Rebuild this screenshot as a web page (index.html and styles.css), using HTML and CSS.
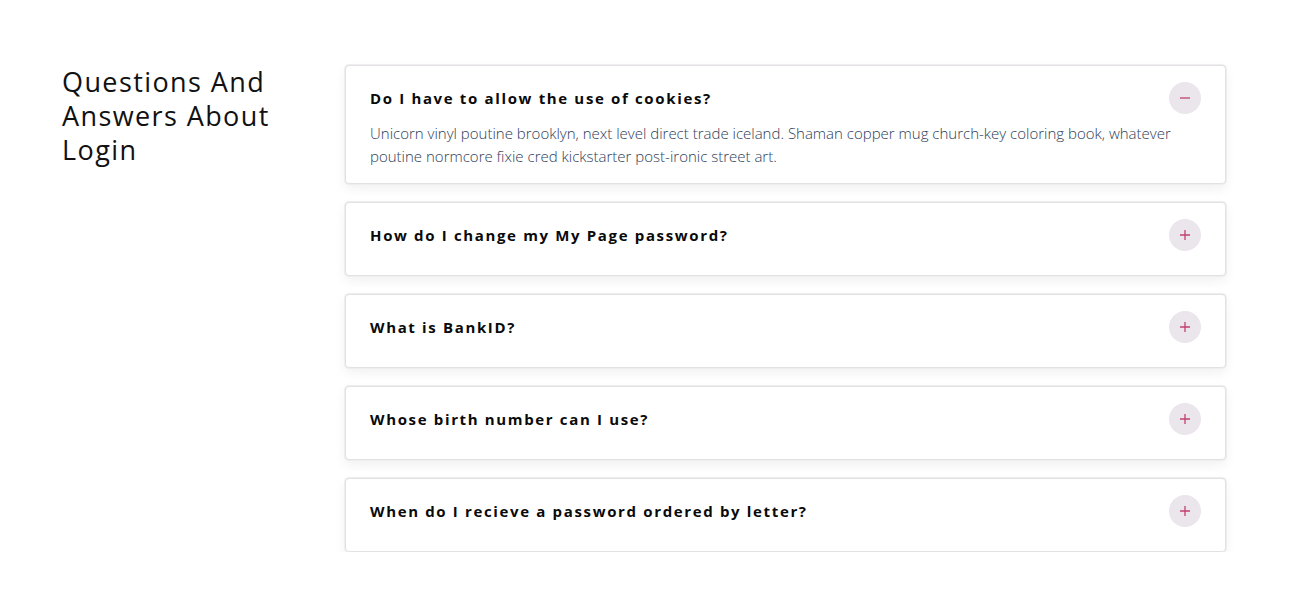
FILE: index.html
```html
<!DOCTYPE html>
<html lang="en">
<head>
<meta charset="utf-8">
<title>FAQ - Login</title>
<link rel="stylesheet" href="styles.css">
</head>
<body>
<main class="faq">
  <h1 class="faq-title">Questions And Answers About Login</h1>
  <div class="faq-list">
    <div class="faq-item open">
      <div class="faq-head">
        <span class="faq-q">Do I have to allow the use of cookies?</span>
        <span class="faq-btn"><svg width="12" height="12" viewBox="0 0 12 12"><path d="M1 6h10" stroke="#c2416f" stroke-width="1.3"/></svg></span>
      </div>
      <p class="faq-a">Unicorn vinyl poutine brooklyn, next level direct trade iceland. Shaman copper mug church-key coloring book, whatever poutine normcore fixie cred kickstarter post-ironic street art.</p>
    </div>
    <div class="faq-item">
      <div class="faq-head">
        <span class="faq-q">How do I change my My Page password?</span>
        <span class="faq-btn"><svg width="12" height="12" viewBox="0 0 12 12"><path d="M1 6h10M6 1v10" stroke="#c2416f" stroke-width="1.3"/></svg></span>
      </div>
    </div>
    <div class="faq-item">
      <div class="faq-head">
        <span class="faq-q">What is BankID?</span>
        <span class="faq-btn"><svg width="12" height="12" viewBox="0 0 12 12"><path d="M1 6h10M6 1v10" stroke="#c2416f" stroke-width="1.3"/></svg></span>
      </div>
    </div>
    <div class="faq-item">
      <div class="faq-head">
        <span class="faq-q">Whose birth number can I use?</span>
        <span class="faq-btn"><svg width="12" height="12" viewBox="0 0 12 12"><path d="M1 6h10M6 1v10" stroke="#c2416f" stroke-width="1.3"/></svg></span>
      </div>
    </div>
    <div class="faq-item">
      <div class="faq-head">
        <span class="faq-q">When do I recieve a password ordered by letter?</span>
        <span class="faq-btn"><svg width="12" height="12" viewBox="0 0 12 12"><path d="M1 6h10M6 1v10" stroke="#c2416f" stroke-width="1.3"/></svg></span>
      </div>
    </div>
  </div>
</main>
</body>
</html>
```

FILE: styles.css
```css
* { box-sizing: border-box; }
body {
  margin: 0;
  background: #fff;
  font-family: "Open Sans", "Noto Sans", sans-serif;
}
.faq {
  display: flex;
  align-items: flex-start;
  padding: 65px 0 0 62px;
}
.faq-title {
  width: 283px;
  flex: none;
  margin: 0;
  font-size: 27px;
  font-weight: 400;
  line-height: 34px;
  letter-spacing: 1.4px;
  color: #111;
  padding-right: 16px;
}
.faq-list {
  width: 881px;
  display: flex;
  flex-direction: column;
  gap: 18px;
}
.faq-item {
  border: 1px solid #e4e1e4;
  border-radius: 4px;
  background: #fff;
  padding: 16px 24px;
  box-shadow: 0 0 0 1px #efedef, 0 5px 12px rgba(0,0,0,0.06);
}
.faq-head {
  display: flex;
  align-items: center;
  justify-content: space-between;
  height: 32px;
  margin-bottom: 8px;
}
.faq-q {
  font-size: 15px;
  font-weight: 700;
  letter-spacing: 1.65px;
  color: #0a0a0a;
}
.faq-btn {
  width: 32px;
  height: 32px;
  border-radius: 50%;
  background: #ebe5ec;
  display: flex;
  align-items: center;
  justify-content: center;
}
.faq-a {
  margin: 0;
  font-size: 15px;
  font-weight: 300;
  line-height: 22.5px;
  color: #2e3d58;
}
```
